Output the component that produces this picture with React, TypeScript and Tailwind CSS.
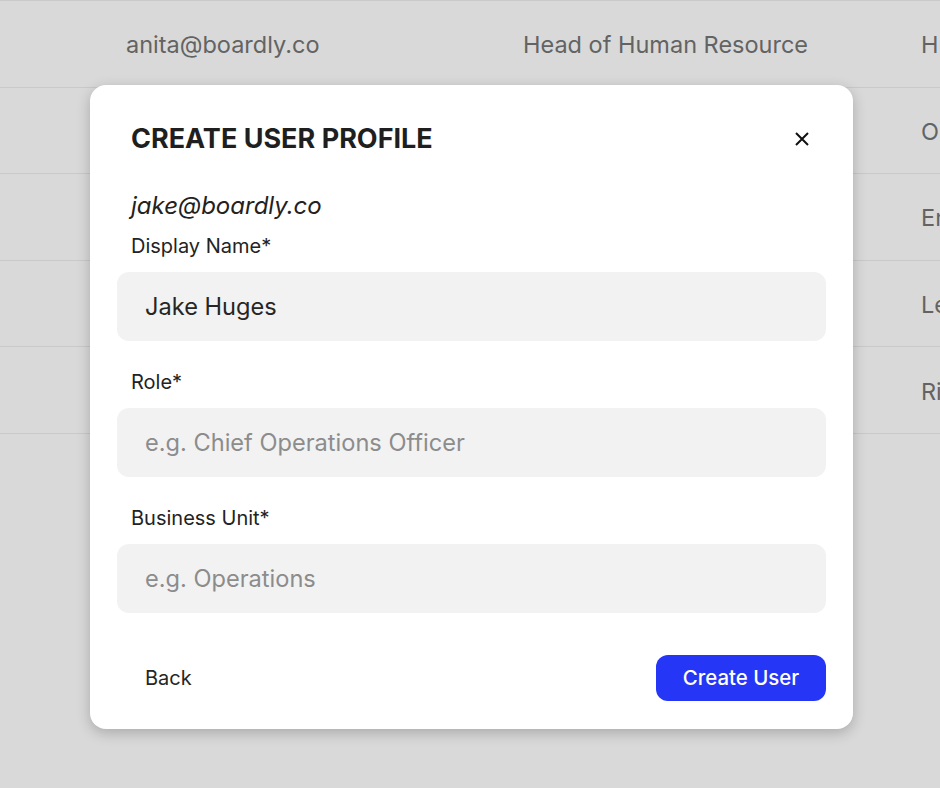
import { useState } from "react";

interface UserRow {
  email: string;
  role: string;
  unit: string;
}

const rows: UserRow[] = [
  { email: "anita@boardly.co", role: "Head of Human Resource", unit: "Human Resources" },
  { email: "omar@boardly.co", role: "Chief Operations Officer", unit: "Operations" },
  { email: "erik@boardly.co", role: "Lead Engineer", unit: "Engineering" },
  { email: "lena@boardly.co", role: "General Counsel", unit: "Legal" },
  { email: "rita@boardly.co", role: "Risk Manager", unit: "Risk" },
];

function Field({
  label,
  value,
  placeholder,
  onChange,
}: {
  label: string;
  value: string;
  placeholder?: string;
  onChange: (v: string) => void;
}) {
  return (
    <div className="flex flex-col">
      <label className="px-[14px] text-[20px] leading-[24px] text-[#232323]">{label}</label>
      <input
        value={value}
        placeholder={placeholder}
        onChange={(e) => onChange(e.target.value)}
        className="mt-[14px] h-[69px] w-full rounded-[12px] bg-[#f2f2f2] px-[28px] text-[23.6px] text-[#262626] outline-none placeholder:text-[#8c8c8c]"
      />
    </div>
  );
}

export default function App() {
  const [name, setName] = useState("Jake Huges");
  const [role, setRole] = useState("");
  const [unit, setUnit] = useState("");

  return (
    <div
      className="relative h-[788px] w-[940px] overflow-hidden bg-[#d9d9d9]"
      style={{ fontFamily: "Inter, 'Noto Sans', sans-serif" }}
    >
      <div className="border-t border-[#c9c9c9]">
        {rows.map((row) => (
          <div
            key={row.email}
            className="flex h-[86.6px] items-center border-b border-[#c9c9c9] pt-[2px] text-[23.5px] text-[#636363]"
          >
            <div className="w-[523px] shrink-0 pl-[126px]">{row.email}</div>
            <div className="w-[398px] shrink-0">{row.role}</div>
            <div className="whitespace-nowrap">{row.unit}</div>
          </div>
        ))}
      </div>

      <div className="absolute left-[90px] top-[85px] flex h-[644px] w-[763px] flex-col rounded-[16px] bg-white px-[27px] pt-[38px] shadow-[0_4px_14px_rgba(0,0,0,0.22)]">
        <div className="flex items-center justify-between pl-[14px] pr-[17px]">
          <h1 className="text-[27px] font-bold leading-[32px] text-[#1f1f1f]">CREATE USER PROFILE</h1>
          <button type="button" className="flex h-[14px] w-[14px] items-center justify-center">
            <svg width="14" height="14" viewBox="0 0 14 14" fill="none" stroke="#111" strokeWidth="2">
              <path d="M1 1L13 13M13 1L1 13" />
            </svg>
          </button>
        </div>

        <p className="mt-[37px] px-[14px] text-[24px] italic leading-[28px] text-[#222]">jake@boardly.co</p>

        <div className="mt-[14px] flex flex-col gap-[29px]">
          <Field label="Display Name*" value={name} onChange={setName} />
          <Field label="Role*" value={role} placeholder="e.g. Chief Operations Officer" onChange={setRole} />
          <Field label="Business Unit*" value={unit} placeholder="e.g. Operations" onChange={setUnit} />
        </div>

        <div className="mt-[42px] flex items-center justify-between">
          <button type="button" className="px-[28px] text-[20px] text-[#262626]">
            Back
          </button>
          <button
            type="button"
            className="h-[46px] w-[170px] rounded-[12px] bg-[#2536f6] text-[20.4px] font-medium text-white"
          >
            Create User
          </button>
        </div>
      </div>
    </div>
  );
}
